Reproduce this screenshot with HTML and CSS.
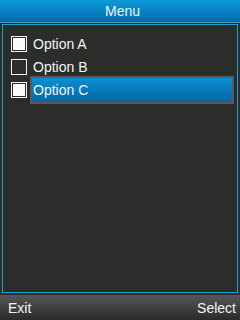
FILE: index.html
```html
<!DOCTYPE html>
<html lang="en">
<head>
    <meta charset="UTF-8">
    <meta name="viewport" content="width=device-width, initial-scale=1.0">
    <title>Menu</title>
    <link rel="stylesheet" href="styles.css">
</head>
<body>
    <div class="title">Menu</div>
    <div class="menu">
        <div class="row">
            <span class="box checked"></span>
            <span class="label">Option A</span>
        </div>
        <div class="row">
            <span class="box"></span>
            <span class="label">Option B</span>
        </div>
        <div class="row">
            <span class="box checked"></span>
            <span class="label selected">Option C</span>
        </div>
    </div>
    <div class="softkeys">
        <span>Exit</span>
        <span>Select</span>
    </div>
</body>
</html>
```

FILE: styles.css
```css
html, body {
    margin: 0;
    height: 320px;
}

body {
    font-family: "Liberation Sans", Arial, sans-serif;
    font-size: 14px;
    color: #f4f4f4;
    background: #2a2d2a;
    display: flex;
    flex-direction: column;
}

.title {
    height: 22px;
    line-height: 22px;
    padding-left: 5px;
    text-align: center;
    background: linear-gradient(#0c9bd9, #0569ab);
    border-bottom: 1px solid #4c93ab;
}

.menu {
    flex: 1;
    margin: 1px 2px 2px;
    padding-top: 8px;
    border: 1px solid #1ba2d6;
}

.row {
    height: 23px;
    display: flex;
    align-items: flex-start;
    padding-left: 8px;
}

.box {
    width: 16px;
    height: 16px;
    box-sizing: border-box;
    margin-top: 3px;
    padding: 1px;
    border: 1px solid #f0f0f0;
    background-clip: content-box;
}

.box.checked {
    background-color: #fafafa;
}

.label {
    flex: 1;
    height: 28px;
    box-sizing: border-box;
    margin: -3px 3px 0 3px;
    padding: 1px 1px 0;
    line-height: 23px;
    border: 2px solid transparent;
}

.label.selected {
    border-color: #5a5a5a;
    background: linear-gradient(#0a90d1, #0565a6);
}

.softkeys {
    height: 25px;
    margin-top: 0;
    padding: 0 4px 0 8px;
    display: flex;
    justify-content: space-between;
    align-items: center;
    background: linear-gradient(#57575a, #2a2a2a);
}
```
